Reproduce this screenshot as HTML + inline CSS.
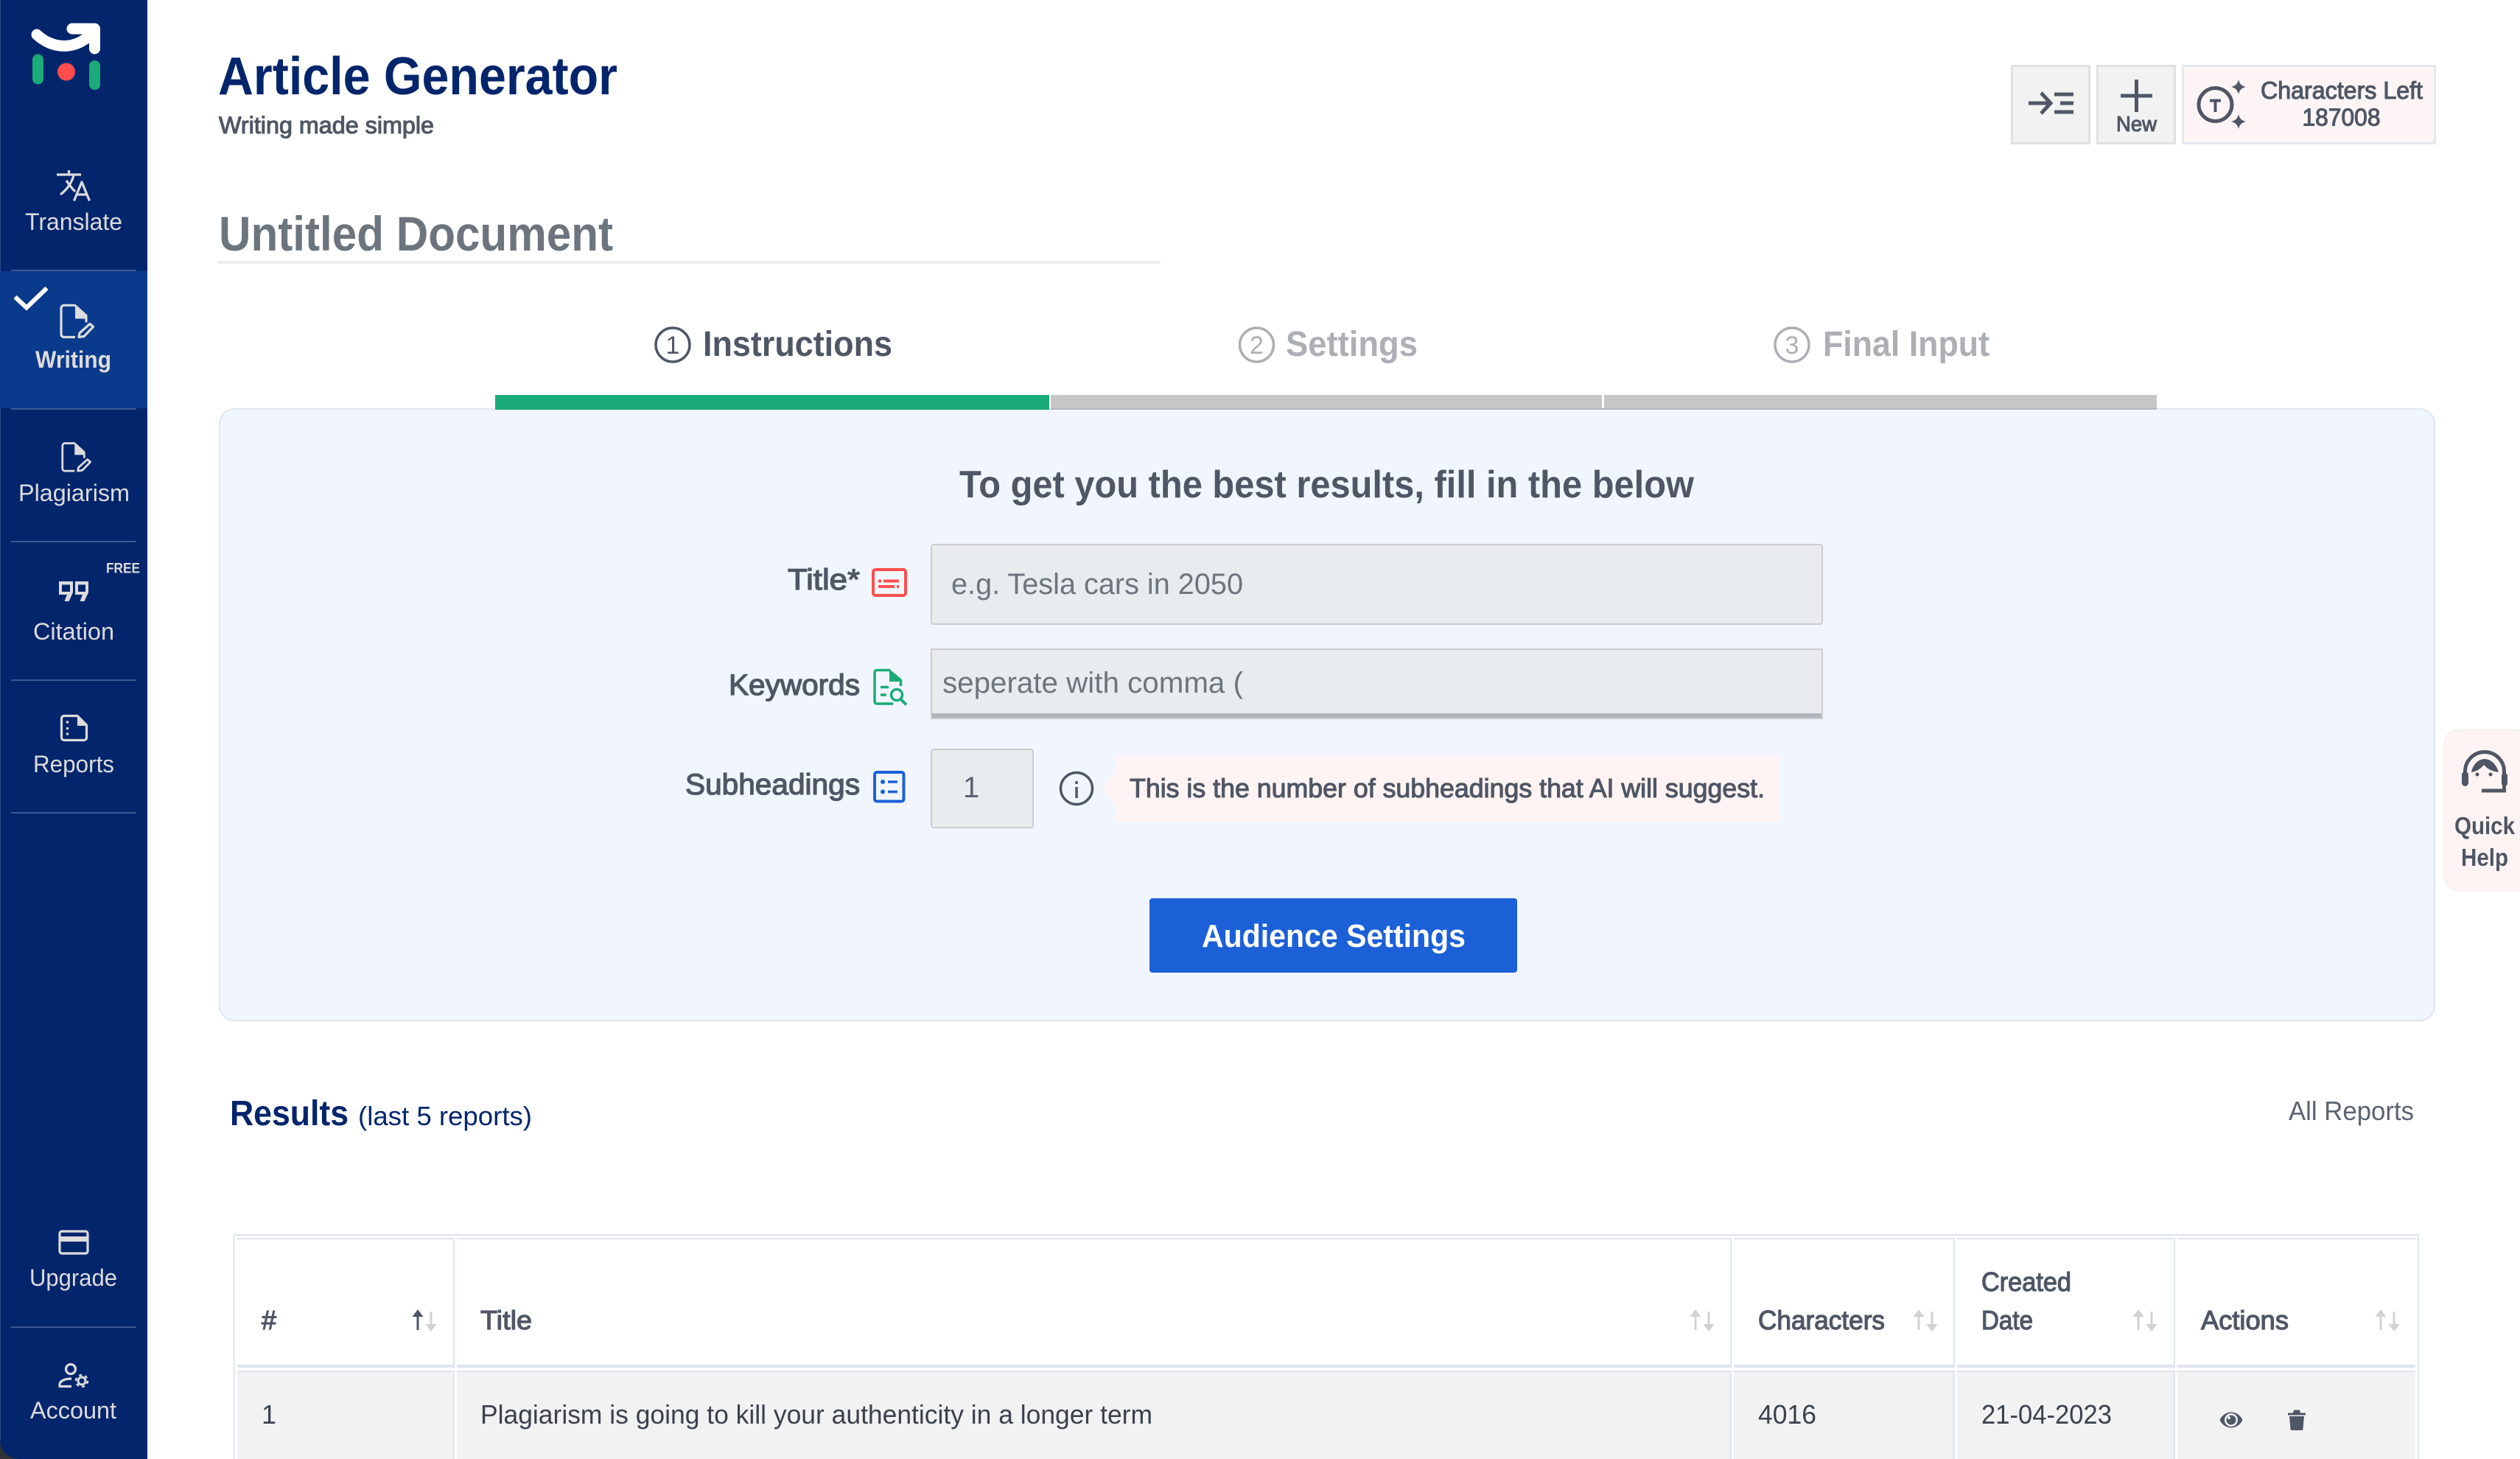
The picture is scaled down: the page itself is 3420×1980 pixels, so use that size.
<!DOCTYPE html>
<html><head><meta charset="utf-8"><title>Article Generator</title>
<style>
html,body{margin:0;padding:0;background:#fff;width:3420px;height:1980px;overflow:hidden}
svg{display:block;position:absolute;left:0;top:0}
text{font-family:"Liberation Sans",Arial,sans-serif;fill:#4f5665}
.nav{fill:#dcdcdc;font-size:32px}
.m{stroke:#4f5665;stroke-width:1.1px}
.b{font-weight:700}
.ic{fill:none;stroke:#dcdcdc;stroke-width:3.2;stroke-linejoin:round}
.hd{font-size:36px;stroke:#4f5665;stroke-width:1.2px}
.td{font-size:36px;fill:#3a414d}
</style></head>
<body>
<svg width="3420" height="1980" viewBox="0 0 3420 1980" xmlns="http://www.w3.org/2000/svg">
<rect width="3420" height="1980" fill="#fff"/>

<!-- sidebar -->
<rect x="0" y="1940" width="40" height="40" fill="#333"/>
<path d="M0 0H200V1980H25A25 25 0 0 1 0 1955Z" fill="#03256c"/>
<rect x="0" y="0" width="1" height="1955" fill="#2b4885"/>
<rect x="0" y="368" width="200" height="186" fill="#0a3a8c"/>
<g fill="#3f5a92">
<rect x="15" y="366" width="170" height="2"/><rect x="15" y="554" width="170" height="2"/>
<rect x="15" y="734" width="170" height="2"/><rect x="15" y="922" width="170" height="2"/>
<rect x="15" y="1102" width="170" height="2"/><rect x="15" y="1800" width="170" height="2"/>
</g>
<!-- logo -->
<path d="M50 47C70 66 102 70 126 44" fill="none" stroke="#fff" stroke-width="15" stroke-linecap="round"/>
<path d="M98 39H128.500V66" fill="none" stroke="#fff" stroke-width="15" stroke-linecap="round" stroke-linejoin="round"/>
<rect x="44" y="73.500" width="15" height="41" rx="7.500" fill="#1aab78"/>
<rect x="121" y="82" width="15" height="40" rx="7.500" fill="#1aab78"/>
<circle cx="90" cy="97.500" r="12" fill="#ff4d4d"/>

<!-- translate -->
<path class="ic" d="M77 237H110M93.500 231V237M82 264C90 258 97 249 100 238M90 245C94 251 98 256 102 260M100.500 272.500L111 247L121.500 272.500M104 264H118" stroke-width="3"/>
<text class="nav" x="34" y="312" textLength="132" lengthAdjust="spacingAndGlyphs">Translate</text>

<!-- writing -->
<path d="M20.500 403L36 417.500L63.500 391" fill="none" stroke="#fff" stroke-width="6"/>
<g transform="translate(81,412.500)">
<path class="ic" d="M21 1.800H6A4 4 0 0 0 2 5.800V41A4 4 0 0 0 6 45H21M36 19V25"/>
<path d="M21 0L37.500 15V20H21Z" fill="#dcdcdc"/>
<path class="ic" d="M26 45L27 39.500L41 27L45.500 31L33 44Z" stroke-width="2.500"/>
</g>
<text class="nav b" x="48" y="499" textLength="103" lengthAdjust="spacingAndGlyphs">Writing</text>

<!-- plagiarism -->
<g transform="translate(83,600) scale(.87)">
<path class="ic" d="M21 1.800H6A4 4 0 0 0 2 5.800V41A4 4 0 0 0 6 45H21M36 19V25"/>
<path d="M21 0L37.500 15V20H21Z" fill="#dcdcdc"/>
<path class="ic" d="M26 45L27 39.500L41 27L45.500 31L33 44Z" stroke-width="2.500"/>
</g>
<text class="nav" x="25" y="680" textLength="151" lengthAdjust="spacingAndGlyphs">Plagiarism</text>

<!-- citation -->
<text x="144" y="777.500" font-size="19" font-weight="700" style="fill:#dcdcdc" textLength="46" lengthAdjust="spacingAndGlyphs">FREE</text>
<path fill-rule="evenodd" fill="#dcdcdc" d="M80 789H99V804L93.500 816H87.500L91 807H80ZM84 793.500V803H95V793.500Z"/>
<path fill-rule="evenodd" fill="#dcdcdc" d="M102 789H120V804L114.500 816H108.500L112 807H102ZM106 793.500V803H116V793.500Z"/>
<text class="nav" x="45" y="868" textLength="110" lengthAdjust="spacingAndGlyphs">Citation</text>

<!-- reports -->
<path class="ic" d="M86.500 971.500H105L117.500 984V1001A3.500 3.500 0 0 1 114 1004.500H87A3.500 3.500 0 0 1 83.500 1001V975A3.500 3.500 0 0 1 86.500 971.500Z" stroke-width="3"/>
<path d="M105 971L118 984V985H105Z" fill="#dcdcdc"/>
<circle cx="91.500" cy="980" r="1.800" fill="#dcdcdc"/><circle cx="91.500" cy="988.500" r="1.800" fill="#dcdcdc"/><circle cx="91.500" cy="996" r="1.800" fill="#dcdcdc"/>
<text class="nav" x="45" y="1048" textLength="110" lengthAdjust="spacingAndGlyphs">Reports</text>

<!-- upgrade -->
<rect class="ic" x="81" y="1671" width="38" height="30" rx="3"/>
<rect x="81" y="1678" width="38" height="7" fill="#dcdcdc"/>
<text class="nav" x="40" y="1745" textLength="119" lengthAdjust="spacingAndGlyphs">Upgrade</text>

<!-- account -->
<circle class="ic" cx="96" cy="1858" r="6.500"/>
<path class="ic" d="M97 1871C88 1871 81 1874 81 1879V1881.500H97"/>
<circle cx="111" cy="1874" r="5" fill="none" stroke="#dcdcdc" stroke-width="3"/>
<circle cx="111" cy="1874" r="8" fill="none" stroke="#dcdcdc" stroke-width="2.500" stroke-dasharray="4 4.380"/>
<text class="nav" x="41" y="1925" textLength="117" lengthAdjust="spacingAndGlyphs">Account</text>

<!-- header -->
<text x="296" y="128" font-size="72" font-weight="700" style="fill:#03256c" textLength="542" lengthAdjust="spacingAndGlyphs">Article Generator</text>
<text class="m" x="297" y="181" font-size="32" textLength="292" lengthAdjust="spacingAndGlyphs">Writing made simple</text>
<text x="297" y="340" font-size="66" font-weight="700" style="fill:#6c757d" textLength="535" lengthAdjust="spacingAndGlyphs">Untitled Document</text>
<rect x="296" y="354" width="1279" height="4" fill="#e9ecef"/>

<!-- top right buttons -->
<rect x="2730.500" y="89.500" width="105" height="105" fill="#f2f2f2" stroke="#e0e0e0" stroke-width="3"/>
<rect x="2846.500" y="89.500" width="105" height="105" fill="#f2f2f2" stroke="#e0e0e0" stroke-width="3"/>
<rect x="2962.500" y="89.500" width="342" height="105" fill="#fdf5f5" stroke="#e3e8f1" stroke-width="3"/>
<path d="M2753 140H2783M2770 126L2783 140L2770 154" fill="none" stroke="#4f5665" stroke-width="5"/>
<path d="M2788 128H2814M2796 140H2814M2788 152H2814" fill="none" stroke="#4f5665" stroke-width="5"/>
<path d="M2878 130H2921M2899.500 108V152" fill="none" stroke="#4f5665" stroke-width="5"/>
<text class="m" x="2872" y="178" font-size="29" textLength="55" lengthAdjust="spacingAndGlyphs">New</text>
<circle cx="3006.500" cy="142" r="22.500" fill="none" stroke="#4f5665" stroke-width="5"/>
<path d="M2999 136.500H3014M3006.500 136.500V152" fill="none" stroke="#4f5665" stroke-width="4"/>
<path d="M3038 108C3039.500 114 3042 116.500 3048 118C3042 119.500 3039.500 122 3038 128C3036.500 122 3034 119.500 3028 118C3034 116.500 3036.500 114 3038 108Z" fill="#4f5665"/>
<path d="M3038 155C3039.500 161 3042 163.500 3048 165C3042 166.500 3039.500 169 3038 175C3036.500 169 3034 166.500 3028 165C3034 163.500 3036.500 161 3038 155Z" fill="#4f5665"/>
<text class="m" x="3068" y="134" font-size="33" textLength="220" lengthAdjust="spacingAndGlyphs">Characters Left</text>
<text class="m" x="3124.500" y="170.500" font-size="33" textLength="106" lengthAdjust="spacingAndGlyphs">187008</text>

<!-- steps -->
<circle cx="913" cy="468" r="23" fill="none" stroke="#4f5665" stroke-width="3.500"/>
<text x="913" y="480" font-size="34" text-anchor="middle">1</text>
<text x="954" y="483" font-size="48" font-weight="700" textLength="257" lengthAdjust="spacingAndGlyphs">Instructions</text>
<circle cx="1705.500" cy="468" r="23" fill="none" stroke="#adafb5" stroke-width="3.500"/>
<text x="1705.500" y="480" font-size="34" text-anchor="middle" style="fill:#adafb5">2</text>
<text x="1745" y="483" font-size="48" font-weight="700" style="fill:#adafb5" textLength="179" lengthAdjust="spacingAndGlyphs">Settings</text>
<circle cx="2432" cy="468" r="23" fill="none" stroke="#adafb5" stroke-width="3.500"/>
<text x="2432" y="480" font-size="34" text-anchor="middle" style="fill:#adafb5">3</text>
<text x="2474" y="483" font-size="48" font-weight="700" style="fill:#adafb5" textLength="226" lengthAdjust="spacingAndGlyphs">Final Input</text>

<!-- card -->
<rect x="298" y="555" width="3006" height="830" rx="20" fill="#f1f6fe" stroke="#e0e6f0" stroke-width="2"/>
<rect x="672" y="536" width="752" height="20" fill="#1aab78"/>
<rect x="1426" y="536" width="748" height="20" fill="#c6c6c6"/>
<rect x="2177" y="536" width="750" height="20" fill="#c6c6c6"/>
<rect x="1426" y="554" width="1501" height="2" fill="#b0b4bd"/>

<text x="1302" y="675" font-size="52" font-weight="700" textLength="997" lengthAdjust="spacingAndGlyphs">To get you the best results, fill in the below</text>

<!-- labels -->
<text class="m" x="1069" y="800" font-size="40" style="stroke-width:1.300px" textLength="98" lengthAdjust="spacingAndGlyphs">Title*</text>
<text class="m" x="989" y="943" font-size="40" style="stroke-width:1.300px" textLength="178" lengthAdjust="spacingAndGlyphs">Keywords</text>
<text class="m" x="930" y="1078" font-size="40" style="stroke-width:1.300px" textLength="237" lengthAdjust="spacingAndGlyphs">Subheadings</text>

<!-- label icons -->
<rect x="1185" y="773" width="44" height="35" rx="3" fill="none" stroke="#ff4d4d" stroke-width="4"/>
<path d="M1192 788.500H1196M1199 788.500H1220M1192 796H1214M1217 796H1220" stroke="#ff4d4d" stroke-width="4" fill="none"/>
<path d="M1208 909.500H1190A3 3 0 0 0 1187 912.500V952A3 3 0 0 0 1190 955H1212M1222.500 923V931" fill="none" stroke="#1aab78" stroke-width="3.500"/>
<path d="M1207 908L1224 922V925H1207Z" fill="#1aab78"/>
<path d="M1195 932.500H1206M1195 943H1203" fill="none" stroke="#1aab78" stroke-width="3.500"/>
<circle cx="1217" cy="943" r="7.500" fill="none" stroke="#1aab78" stroke-width="3.500"/>
<path d="M1222.500 949L1230 956.500" fill="none" stroke="#1aab78" stroke-width="4"/>
<rect x="1187" y="1048" width="39.500" height="39.500" rx="3" fill="none" stroke="#1c60d8" stroke-width="4"/>
<circle cx="1198" cy="1061" r="3" fill="#1c60d8"/><circle cx="1198" cy="1074.500" r="3" fill="#1c60d8"/>
<path d="M1205 1061H1218M1205 1074.500H1218" stroke="#1c60d8" stroke-width="3.500" fill="none"/>

<!-- inputs -->
<rect x="1264" y="739" width="1209" height="108" rx="3" fill="#e9ecef" stroke="#cdcdcd" stroke-width="2"/>
<text x="1291" y="806" font-size="40" style="fill:#6c757d" textLength="396" lengthAdjust="spacingAndGlyphs">e.g. Tesla cars in 2050</text>
<rect x="1264" y="881" width="1209" height="94" fill="#e9ecef" stroke="#cdcdcd" stroke-width="2"/>
<rect x="1265" y="968" width="1207" height="6" fill="#b0b4bd"/>
<text x="1279" y="940" font-size="40" style="fill:#6c757d" textLength="408" lengthAdjust="spacingAndGlyphs">seperate with comma (</text>
<rect x="1264" y="1017" width="138" height="106" rx="3" fill="#e9ecef" stroke="#cdcdcd" stroke-width="2"/>
<text x="1307" y="1082" font-size="40" style="fill:#5b6270">1</text>
<circle cx="1461" cy="1070" r="21.500" fill="none" stroke="#4f5665" stroke-width="3.500"/>
<rect x="1459.300" y="1068" width="3.500" height="15" fill="#4f5665"/><rect x="1459.300" y="1060" width="3.500" height="4" fill="#4f5665"/>
<path d="M1497 1070L1515 1045V1095Z" fill="#fff4f3"/>
<rect x="1515" y="1026" width="899" height="89" fill="#fff4f3"/>
<text class="m" x="1533" y="1082" font-size="36" textLength="862" lengthAdjust="spacingAndGlyphs">This is the number of subheadings that AI will suggest.</text>

<!-- button -->
<rect x="1560" y="1219" width="499" height="101" rx="4" fill="#1c60d8"/>
<text x="1631" y="1285" font-size="44" font-weight="700" style="fill:#fff" textLength="358" lengthAdjust="spacingAndGlyphs">Audience Settings</text>

<!-- quick help -->
<path d="M3420 990H3337A20 20 0 0 0 3317 1010V1189A20 20 0 0 0 3337 1209H3420Z" fill="#fff4f3" stroke="#f2eeee" stroke-width="1"/>
<path d="M3345.500 1050V1047A26.500 26.500 0 0 1 3398.500 1047V1073H3368" fill="none" stroke="#4f5665" stroke-width="5"/>
<rect x="3341" y="1047" width="9" height="20" rx="4.500" fill="#4f5665"/>
<rect x="3395" y="1049" width="8" height="18" rx="4" fill="#4f5665"/>
<path d="M3354 1048C3356 1037 3364 1030 3372 1030C3380 1030 3388 1037 3391 1048C3383 1047 3376 1044 3371 1038C3367 1043 3361 1047 3354 1048Z" fill="#4f5665"/>
<circle cx="3362" cy="1051" r="2.500" fill="#4f5665"/><circle cx="3380" cy="1051" r="2.500" fill="#4f5665"/>
<text x="3331" y="1132" font-size="33" font-weight="700" textLength="82" lengthAdjust="spacingAndGlyphs">Quick</text>
<text x="3340" y="1175" font-size="33" font-weight="700" textLength="64" lengthAdjust="spacingAndGlyphs">Help</text>

<!-- results -->
<text x="312" y="1527" font-size="48" font-weight="700" style="fill:#03256c" textLength="161" lengthAdjust="spacingAndGlyphs">Results</text>
<text x="486" y="1527" font-size="36" style="fill:#03256c" textLength="236" lengthAdjust="spacingAndGlyphs">(last 5 reports)</text>
<text x="3106" y="1520" font-size="36" style="fill:#5b6270" textLength="170" lengthAdjust="spacingAndGlyphs">All Reports</text>

<!-- table -->
<path d="M317.500 1980V1676H3282V1980" fill="none" stroke="#dfe4ee" stroke-width="2"/>
<g fill="#f2f2f2">
<rect x="322" y="1860" width="295" height="120"/>
<rect x="620" y="1860" width="1729" height="120"/>
<rect x="2353" y="1860" width="300" height="120"/>
<rect x="2656" y="1860" width="296" height="120"/>
<rect x="2955" y="1860" width="323" height="120"/>
</g>
<g fill="#dfe4ee">
<rect x="322" y="1680" width="295" height="2"/><rect x="620" y="1680" width="1729" height="2"/><rect x="2353" y="1680" width="300" height="2"/><rect x="2656" y="1680" width="296" height="2"/><rect x="2955" y="1680" width="323" height="2"/>
<rect x="322" y="1852" width="295" height="4"/><rect x="620" y="1852" width="1729" height="4"/><rect x="2353" y="1852" width="300" height="4"/><rect x="2656" y="1852" width="296" height="4"/><rect x="2955" y="1852" width="323" height="4"/>
<rect x="322" y="1860" width="295" height="2"/><rect x="620" y="1860" width="1729" height="2"/><rect x="2353" y="1860" width="300" height="2"/><rect x="2656" y="1860" width="296" height="2"/><rect x="2955" y="1860" width="323" height="2"/>
<rect x="615" y="1680" width="2" height="176"/><rect x="615" y="1860" width="2" height="120"/>
<rect x="2348" y="1680" width="2" height="176"/><rect x="2348" y="1860" width="2" height="120"/>
<rect x="2651" y="1680" width="2" height="176"/><rect x="2651" y="1860" width="2" height="120"/>
<rect x="2950" y="1680" width="2" height="176"/><rect x="2950" y="1860" width="2" height="120"/>
</g>
<text class="hd" x="355" y="1804" textLength="20" lengthAdjust="spacingAndGlyphs">#</text>
<text class="hd" x="652" y="1804" textLength="70" lengthAdjust="spacingAndGlyphs">Title</text>
<text class="hd" x="2386" y="1804" textLength="172" lengthAdjust="spacingAndGlyphs">Characters</text>
<text class="hd" x="2689" y="1752" textLength="122" lengthAdjust="spacingAndGlyphs">Created</text>
<text class="hd" x="2689" y="1804" textLength="70" lengthAdjust="spacingAndGlyphs">Date</text>
<text class="hd" x="2987" y="1804" textLength="119" lengthAdjust="spacingAndGlyphs">Actions</text>
<!-- sort arrows -->
<g fill="#4f5665"><rect x="565.500" y="1785" width="3" height="20"/><path d="M567 1777L574.500 1787H559.500Z"/></g>
<g fill="#d2d2d2">
<rect x="583.500" y="1780" width="3" height="20"/><path d="M585 1807L577.500 1797H592.500Z"/>
<rect x="2299.500" y="1785" width="3" height="20"/><path d="M2301 1777L2308.500 1787H2293.500Z"/><rect x="2317.500" y="1780" width="3" height="20"/><path d="M2319 1807L2311.500 1797H2326.500Z"/>
<rect x="2602.500" y="1785" width="3" height="20"/><path d="M2604 1777L2611.500 1787H2596.500Z"/><rect x="2620.500" y="1780" width="3" height="20"/><path d="M2622 1807L2614.500 1797H2629.500Z"/>
<rect x="2900.500" y="1785" width="3" height="20"/><path d="M2902 1777L2909.500 1787H2894.500Z"/><rect x="2918.500" y="1780" width="3" height="20"/><path d="M2920 1807L2912.500 1797H2927.500Z"/>
<rect x="3229.500" y="1785" width="3" height="20"/><path d="M3231 1777L3238.500 1787H3223.500Z"/><rect x="3247.500" y="1780" width="3" height="20"/><path d="M3249 1807L3241.500 1797H3256.500Z"/>
</g>
<!-- row -->
<text class="td" x="355" y="1932">1</text>
<text class="td" x="652" y="1932" textLength="912" lengthAdjust="spacingAndGlyphs">Plagiarism is going to kill your authenticity in a longer term</text>
<text class="td" x="2386" y="1932" textLength="79" lengthAdjust="spacingAndGlyphs">4016</text>
<text class="td" x="2689" y="1932" textLength="177" lengthAdjust="spacingAndGlyphs">21-04-2023</text>
<path d="M3012.500 1927C3019 1913 3037 1913 3043.500 1927C3037 1941 3019 1941 3012.500 1927Z" fill="#4f5665"/>
<circle cx="3028" cy="1927" r="9" fill="#f2f2f2"/><circle cx="3028" cy="1927" r="6.500" fill="#4f5665"/><circle cx="3025" cy="1924" r="2" fill="#f2f2f2"/>
<path d="M3105 1917.500H3112L3113 1913.500H3121L3122 1917.500H3129V1920.500H3105Z" fill="#4f5665"/>
<path d="M3107 1922H3127L3125.500 1939A2 2 0 0 1 3123.500 1941H3110.500A2 2 0 0 1 3108.500 1939Z" fill="#4f5665"/>
</svg>
</body></html>
